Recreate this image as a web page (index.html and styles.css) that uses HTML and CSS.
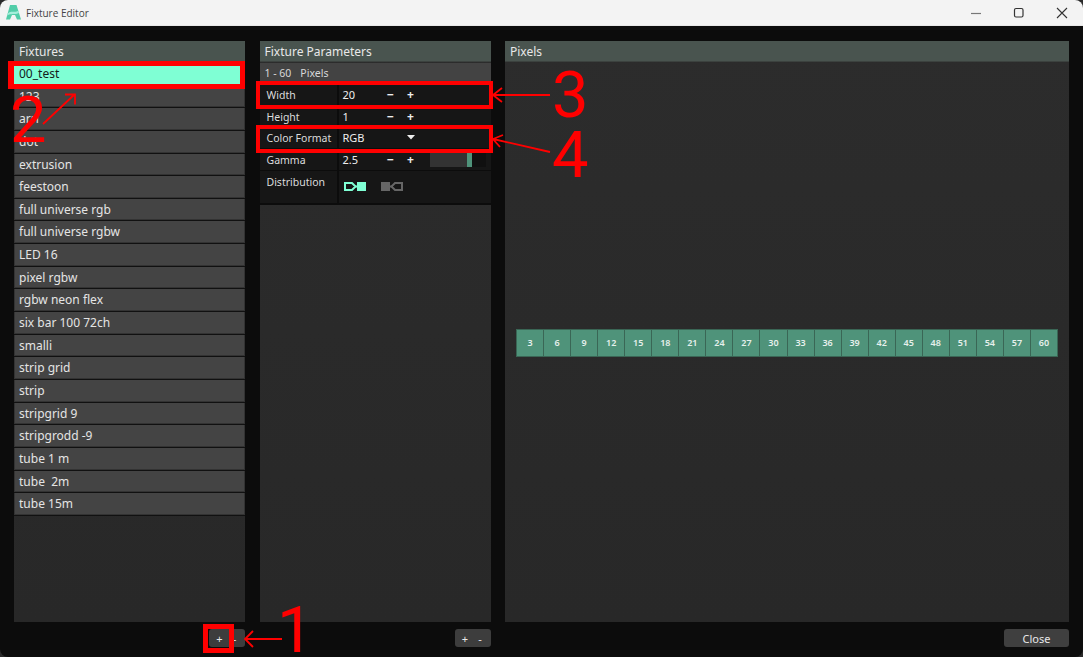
FILE: index.html
```html
<!DOCTYPE html>
<html lang="en">
<head>
<meta charset="utf-8">
<title>Fixture Editor</title>
<link rel="stylesheet" href="styles.css">
</head>
<body>
<div class="window">
  <header class="titlebar">
    <svg class="logo" width="15" height="15" viewBox="0 0 15 15"><path d="M4 0h6.500L15 14.500h-4L9 10H6l-2 4.500H0z" fill="#52cda8"/><path d="M1.800 8.500C5 5.500 8 8 12.300 5.800L13 8C9 10 5 8 1.200 10.500z" fill="#a4eeda"/></svg>
    <span class="title">Fixture Editor</span>
    <div class="controls">
      <svg width="12" height="12" viewBox="0 0 12 12"><path d="M1 6.500h10" stroke="#777" stroke-width="1.200"/></svg>
      <svg width="12" height="12" viewBox="0 0 12 12"><rect x="1.500" y="1.500" width="8.500" height="8.500" rx="1.500" fill="none" stroke="#333" stroke-width="1.200"/></svg>
      <svg width="12" height="12" viewBox="0 0 12 12"><path d="M1 1l10 10M11 1L1 11" stroke="#333" stroke-width="1.100"/></svg>
    </div>
  </header>
  <main class="panels">
    <section class="col col-side">
      <div class="panel">
        <h2 class="panel-head">Fixtures</h2>
        <ul class="list">
          <li class="item selected">00_test</li>
          <li class="item">123</li>
          <li class="item">arrl</li>
          <li class="item">dot</li>
          <li class="item">extrusion</li>
          <li class="item">feestoon</li>
          <li class="item">full universe rgb</li>
          <li class="item">full universe rgbw</li>
          <li class="item">LED 16</li>
          <li class="item">pixel rgbw</li>
          <li class="item">rgbw neon flex</li>
          <li class="item">six bar 100 72ch</li>
          <li class="item">smalli</li>
          <li class="item">strip grid</li>
          <li class="item">strip</li>
          <li class="item">stripgrid 9</li>
          <li class="item">stripgrodd -9</li>
          <li class="item">tube 1 m</li>
          <li class="item">tube&nbsp;&nbsp;2m</li>
          <li class="item">tube 15m</li>
        </ul>
      </div>
      <div class="foot"><div class="btn-pair"><span>+</span><span>-</span></div></div>
    </section>
    <section class="col col-side">
      <div class="panel">
        <h2 class="panel-head">Fixture Parameters</h2>
        <div class="sub-head"><span>1 - 60</span><span>Pixels</span></div>
        <div class="param"><div class="param-label">Width</div><div class="param-value"><span class="num">20</span><span class="step">−</span><span class="step">+</span></div></div>
        <div class="param"><div class="param-label">Height</div><div class="param-value"><span class="num">1</span><span class="step">−</span><span class="step">+</span></div></div>
        <div class="param"><div class="param-label">Color Format</div><div class="param-value"><span class="num">RGB</span><svg class="caret" width="8" height="5" viewBox="0 0 8 5"><path d="M0 0h8L4 4.500z" fill="#eee"/></svg></div></div>
        <div class="param"><div class="param-label">Gamma</div><div class="param-value"><span class="num">2.5</span><span class="step">−</span><span class="step">+</span><div class="slider"><div class="slider-fill"></div><div class="slider-knob"></div></div></div></div>
        <div class="param param-tall"><div class="param-label">Distribution</div><div class="param-value dist">
          <svg width="22" height="9" viewBox="0 0 22 9"><path d="M1 1h7l3.500 3.500L8 8H1z" fill="none" stroke="#7fffd4" stroke-width="2"/><path d="M11 3.500h3v2h-3z" fill="#7fffd4"/><rect x="13" y="0" width="9" height="9" fill="#7fffd4"/></svg>
          <svg width="22" height="9" viewBox="0 0 22 9"><rect x="0" y="0" width="9" height="9" fill="#666"/><path d="M9 3.500h3v2H9z" fill="#666"/><path d="M21 1h-7l-3.500 3.500L14 8h7z" fill="none" stroke="#666" stroke-width="2"/></svg>
        </div></div>
      </div>
      <div class="foot"><div class="btn-pair"><span>+</span><span>-</span></div></div>
    </section>
    <section class="col col-main">
      <div class="panel">
        <h2 class="panel-head">Pixels</h2>
        <div class="grid-area">
          <div class="cells">
            <div class="cell">3</div><div class="cell">6</div><div class="cell">9</div><div class="cell">12</div><div class="cell">15</div><div class="cell">18</div><div class="cell">21</div><div class="cell">24</div><div class="cell">27</div><div class="cell">30</div><div class="cell">33</div><div class="cell">36</div><div class="cell">39</div><div class="cell">42</div><div class="cell">45</div><div class="cell">48</div><div class="cell">51</div><div class="cell">54</div><div class="cell">57</div><div class="cell">60</div>
          </div>
        </div>
      </div>
      <div class="foot"><button class="close">Close</button></div>
    </section>
  </main>
  <div class="mark box box-1"></div>
  <div class="mark box box-2"></div>
  <div class="mark box box-3"></div>
  <div class="mark box box-4"></div>
  <svg class="mark arrows" width="1083" height="657" viewBox="0 0 1083 657" fill="none" stroke="#f00" stroke-width="1.800">
    <path d="M282 639H245M253 631l-8 8 8 8"/>
    <path d="M43 124 75 94M65 94.500h10v10"/>
    <path d="M550 95H493M502 88l-9 7 9 7"/>
    <path d="M550 152 493 139M500 147l-7-8 10-4"/>
  </svg>
  <span class="mark num-mark n1">1</span>
  <span class="mark num-mark n2">2</span>
  <span class="mark num-mark n3">3</span>
  <span class="mark num-mark n4">4</span>
</div>
</body>
</html>
```
FILE: styles.css
```css
* { box-sizing: border-box; }
html, body { margin: 0; height: 100%; background: #2a2a2a; }
body { overflow: hidden; font-family: "Noto Sans", sans-serif; font-size: 12px; color: #e4e4e4; }
.window { position: relative; width: 1083px; height: 657px; display: flex; flex-direction: column; background: #0c0c0c; border-radius: 8px; overflow: hidden; }

.titlebar { height: 26px; flex: none; display: flex; align-items: center; padding-left: 6px; background: #f3f3f3; border-bottom: 1px solid #e8e8e8; }
.logo { flex: none; }
.title { margin-left: 5px; font-family: "Open Sans", sans-serif; font-size: 10px; color: #444; }
.controls { margin-left: auto; display: flex; gap: 31px; padding-right: 15px; }

.panels { flex: 1; display: flex; gap: 14.500px; padding: 15px 14px 0; min-height: 0; }
.col { display: flex; flex-direction: column; }
.col-side { width: 231px; flex: none; }
.col-main { flex: 1; }
.panel { height: 581px; display: flex; flex-direction: column; background: linear-gradient(#2c2c2c, #282828); }
.panel-head { margin: 0 0 1px; height: 21px; flex: none; padding-left: 5px; font-size: 12px; font-weight: 400; line-height: 21px; color: #e8e8e8; background: #49544f; border-bottom: 1px solid #3c423f; }

.list { list-style: none; margin: 0; padding: 0; }
.item { height: 21.650px; margin-bottom: 1px; padding-left: 4px; font-size: 12px; line-height: 21.650px; background: #444; border: solid #333; border-width: 0 1px 1px; box-shadow: 0 1px 0 #111; }
.item.selected { background: #7fffd4; color: #14201c; border: 0; padding-left: 5px; }

.sub-head { height: 21px; flex: none; display: flex; gap: 9px; padding-left: 5px; font-size: 10.500px; line-height: 20px; color: #d8d8d8; background: #434343; }
.param { height: 21.700px; flex: none; display: flex; background: #161616; border-bottom: 1px solid #0c0c0c; font-size: 11px; }
.param-tall { height: 34px; border-bottom-width: 2px; }
.param-label { width: 79px; flex: none; padding-left: 7px; font-size: 10.500px; line-height: 22px; white-space: nowrap; color: #dcdcdc; border-right: 2px solid #0c0c0c; }
.param-value { flex: 1; display: flex; align-items: center; padding-left: 4px; color: #eee; }
.num { width: 38px; flex: none; }
.step { width: 20px; flex: none; text-align: center; font-weight: 700; font-size: 12px; }
.caret { margin-left: 26px; }
.slider { width: 56px; height: 15px; margin-left: 9px; display: flex; background: #101010; }
.slider-fill { width: 37px; background: #333; }
.slider-knob { width: 5px; background: #4f937a; }
.dist { gap: 15px; padding-left: 5px; }

.foot { flex: 1; display: flex; justify-content: flex-end; align-items: flex-start; padding-top: 7px; }
.btn-pair { width: 36px; height: 18px; display: flex; align-items: center; padding-left: 3px; background: #3d3d3d; border-radius: 3px; font-size: 11px; color: #e8e8e8; }
.btn-pair span { width: 15px; text-align: center; }
.close { width: 65px; height: 18px; padding: 0; border: 0; border-radius: 3px; background: #3f3f3f; color: #e8e8e8; font: 11px "Noto Sans", sans-serif; }

.grid-area { flex: 1; display: flex; align-items: center; justify-content: center; }
.cells { display: flex; gap: 1px; padding: 1px; background: #3a6655; }
.cell { width: 26.050px; height: 26px; display: flex; align-items: center; justify-content: center; font-size: 9px; font-weight: 600; color: #e6f0ec; background: #4f937a; }

.mark { position: absolute; pointer-events: none; }
.box { border: 5px solid #f00; }
.box-1 { left: 203px; top: 624px; width: 31px; height: 29px; }
.box-2 { left: 8px; top: 61px; width: 237px; height: 28px; border-left-width: 6px; }
.box-3 { left: 256px; top: 81px; width: 237px; height: 28px; border-width: 4px; }
.box-4 { left: 256px; top: 125px; width: 237px; height: 28px; border-width: 4px; }
.arrows { left: 0; top: 0; }
.num-mark { font-family: Roboto, sans-serif; font-size: 65px; line-height: 80px; color: #f00; }
.n1 { left: 277px; top: 590px; }
.n2 { left: 10px; top: 80px; }
.n3 { left: 552px; top: 55px; }
.n4 { left: 552px; top: 115px; }
```
